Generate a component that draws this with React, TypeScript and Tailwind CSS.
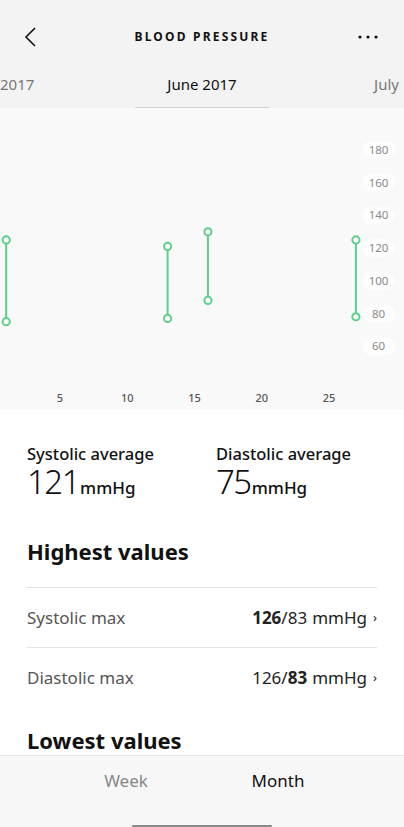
import React from 'react'

const font = { fontFamily: '"Noto Sans", "Open Sans", sans-serif' }

const yLabels = [180, 160, 140, 120, 100, 80, 60]
const xLabels = [5, 10, 15, 20, 25]

// day, systolic, diastolic
const readings: [number, number, number][] = [
  [1, 125, 75],
  [13, 121, 77],
  [16, 130, 88],
  [27, 125, 78],
]

const yPos = (v: number) => 42 + (180 - v) * 1.635
const xPos = (d: number) => 60 + (d - 5) * 13.45

function Chart() {
  return (
    <div className="h-[302px] bg-[#f9f9f9]">
      <svg width="404" height="302" viewBox="0 0 404 302">
        {yLabels.map((v) => (
          <g key={v}>
            <rect x="362" y={yPos(v) - 9} width="33" height="18" rx="9" fill="#fdfdfd" />
            <text
              x="378.5"
              y={yPos(v) + 4}
              textAnchor="middle"
              fontSize="11.5"
              fill="#8a8a8a"
              style={font}
            >
              {v}
            </text>
          </g>
        ))}
        {xLabels.map((d) => (
          <text
            key={d}
            x={xPos(d)}
            y="294"
            textAnchor="middle"
            fontSize="11"
            fontWeight="500"
            fill="#555"
            style={font}
          >
            {d}
          </text>
        ))}
        {readings.map(([d, sys, dia]) => (
          <g key={d} stroke="#5ccf88" strokeWidth="2">
            <line x1={xPos(d)} x2={xPos(d)} y1={yPos(sys) + 4} y2={yPos(dia) - 4} />
            <circle cx={xPos(d)} cy={yPos(sys)} r="3.6" fill="#f9f9f9" />
            <circle cx={xPos(d)} cy={yPos(dia)} r="3.6" fill="#f9f9f9" />
          </g>
        ))}
      </svg>
    </div>
  )
}

function MaxRow({ label, sys, dia, boldSys }: { label: string; sys: number; dia: number; boldSys: boolean }) {
  return (
    <div className="flex h-[59px] items-center justify-between">
      <span className="text-[17px] text-[#555]">{label}</span>
      <span className="flex items-center text-[17px] text-[#222]">
        <span className={boldSys ? 'font-bold' : ''}>{sys}</span>/
        <span className={boldSys ? '' : 'font-bold'}>{dia}</span>
        <span className="ml-[5px]">mmHg</span>
        <span className="ml-[6px] text-[13px]">›</span>
      </span>
    </div>
  )
}

function Average({ label, value }: { label: string; value: number }) {
  return (
    <div>
      <div className="text-[16.5px] font-medium leading-[20px]">{label}</div>
      <div className="flex items-baseline leading-[36px]">
        <span className="text-[33px] font-light tracking-[-1.5px]">{value}</span>
        <span className="ml-[1px] text-[17px] font-medium">mmHg</span>
      </div>
    </div>
  )
}

export default function App() {
  return (
    <div className="flex h-[827px] w-[404px] flex-col overflow-hidden bg-white text-[#111]" style={font}>
      <div className="flex-1 overflow-hidden">
        <div className="bg-[#f3f3f3]">
          <div className="grid h-[74px] grid-cols-[1fr_auto_1fr] items-center px-[24px]">
            <svg width="14" height="22" viewBox="0 0 14 22">
              <path d="M11 2 L2 11 L11 20" fill="none" stroke="#111" strokeWidth="1.6" />
            </svg>
            <span className="text-[12px] font-bold tracking-[2.2px] text-[#111]">BLOOD PRESSURE</span>
            <svg className="justify-self-end" width="24" height="6" viewBox="0 0 24 6">
              <circle cx="4" cy="3" r="1.6" fill="#111" />
              <circle cx="12" cy="3" r="1.6" fill="#111" />
              <circle cx="20" cy="3" r="1.6" fill="#111" />
            </svg>
          </div>
          <div className="flex h-[34px] items-start justify-between">
            <span className="w-[60px] text-[15px] leading-[20px] text-[#777]">2017</span>
            <div className="flex h-full w-[134px] flex-col items-center justify-between">
              <span className="text-[15px] leading-[20px] text-[#111]">June 2017</span>
              <div className="h-[1px] w-full bg-[#d2d2d2]" />
            </div>
            <span className="w-[60px] pr-[5px] text-right text-[15px] leading-[20px] text-[#777]">July</span>
          </div>
        </div>
        <Chart />
        <div className="px-[27px]">
          <div className="flex pt-[34px]">
            <div className="w-[189px]">
              <Average label="Systolic average" value={121} />
            </div>
            <Average label="Diastolic average" value={75} />
          </div>
          <div className="pt-[30px] text-[22px] font-bold leading-[30px]">Highest values</div>
          <div className="mt-[21px] border-t border-[#e3e3e3]">
            <MaxRow label="Systolic max" sys={126} dia={83} boldSys={true} />
            <div className="border-t border-[#e3e3e3]" />
            <MaxRow label="Diastolic max" sys={126} dia={83} boldSys={false} />
          </div>
          <div className="pt-[18px] text-[22px] font-bold leading-[30px]">Lowest values</div>
        </div>
      </div>
      <div className="relative h-[72px] border-t border-[#e6e6e6] bg-[#f7f7f7]">
        <div className="flex justify-center pt-[12px]">
          <span className="w-[152px] text-center text-[17px] text-[#888]">Week</span>
          <span className="w-[152px] text-center text-[17px] text-[#111]">Month</span>
        </div>
        <div className="absolute bottom-0 left-[132px] h-[2px] w-[140px] rounded-full bg-[#8a8a8a]" />
      </div>
    </div>
  )
}
